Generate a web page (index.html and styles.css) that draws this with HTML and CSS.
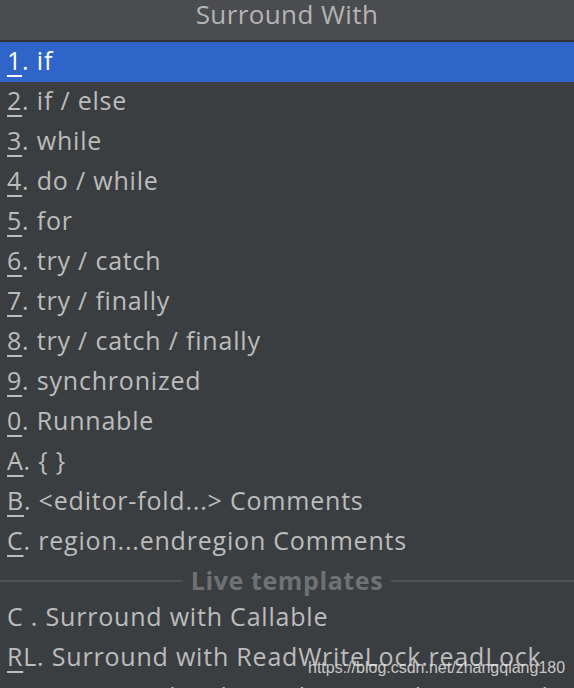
FILE: index.html
```html
<!DOCTYPE html>
<html>
<head>
<meta charset="utf-8">
<link rel="stylesheet" href="styles.css">
</head>
<body>
<div class="popup">
  <div class="title">Surround With</div>
  <ul class="list">
    <li class="item selected"><span class="key">1</span>. if</li>
    <li class="item"><span class="key">2</span>. if / else</li>
    <li class="item"><span class="key">3</span>. while</li>
    <li class="item"><span class="key">4</span>. do / while</li>
    <li class="item"><span class="key">5</span>. for</li>
    <li class="item"><span class="key">6</span>. try / catch</li>
    <li class="item"><span class="key">7</span>. try / finally</li>
    <li class="item"><span class="key">8</span>. try / catch / finally</li>
    <li class="item"><span class="key">9</span>. synchronized</li>
    <li class="item"><span class="key">0</span>. Runnable</li>
    <li class="item"><span class="key">A</span>. { }</li>
    <li class="item"><span class="key">B</span>. &lt;editor-fold...&gt; Comments</li>
    <li class="item"><span class="key">C</span>. region...endregion Comments</li>
    <li class="separator"><span class="sep-label">Live templates</span></li>
    <li class="item">C . Surround with Callable</li>
    <li class="item"><span class="key">R</span>L. Surround with ReadWriteLock.readLock</li>
    <li class="item"><span class="key">W</span>L. Surround with ReadWriteLock.writeLock</li>
  </ul>
  <div class="watermark">https://blog.csdn.net/zhangqiang180</div>
</div>
</body>
</html>
```
FILE: styles.css
```css
html, body {
  margin: 0;
  padding: 0;
  background: #3b3e41;
  overflow: hidden;
}
.popup {
  position: relative;
  width: 574px;
  height: 688px;
  overflow: hidden;
  font-family: "Open Sans", "Liberation Sans", Arial, sans-serif;
  background: #3b3e41;
}
.title {
  height: 40px;
  line-height: 28px;
  background: #4a4c50;
  color: #b4b4b4;
  text-align: center;
  font-size: 26px;
  letter-spacing: 0.4px;
  border-bottom: 2px solid #303234;
}
.list {
  list-style: none;
  margin: 0;
  padding: 0;
}
.item {
  height: 40px;
  line-height: 37px;
  padding-left: 7px;
  font-size: 25px;
  letter-spacing: 0.8px;
  color: #bcbcbc;
  white-space: nowrap;
}
.item.selected {
  background: #2f64c9;
  color: #ffffff;
}
.key {
  text-decoration: underline;
  text-underline-offset: 5px;
  text-decoration-thickness: 2px;
}
.separator {
  height: 36px;
  display: flex;
  align-items: center;
  gap: 8px;
}
.separator::before,
.separator::after {
  content: "";
  flex: 1;
  height: 2px;
  margin-top: 2px;
  background: #505356;
}
.sep-label {
  font-size: 25px;
  font-weight: bold;
  letter-spacing: 0.6px;
  line-height: 30px;
  color: #707173;
}
.watermark {
  position: absolute;
  left: 308px;
  top: 659px;
  font-family: "Liberation Sans", Arial, sans-serif;
  font-size: 16px;
  color: rgba(235, 235, 235, 0.8);
  white-space: nowrap;
}
```
